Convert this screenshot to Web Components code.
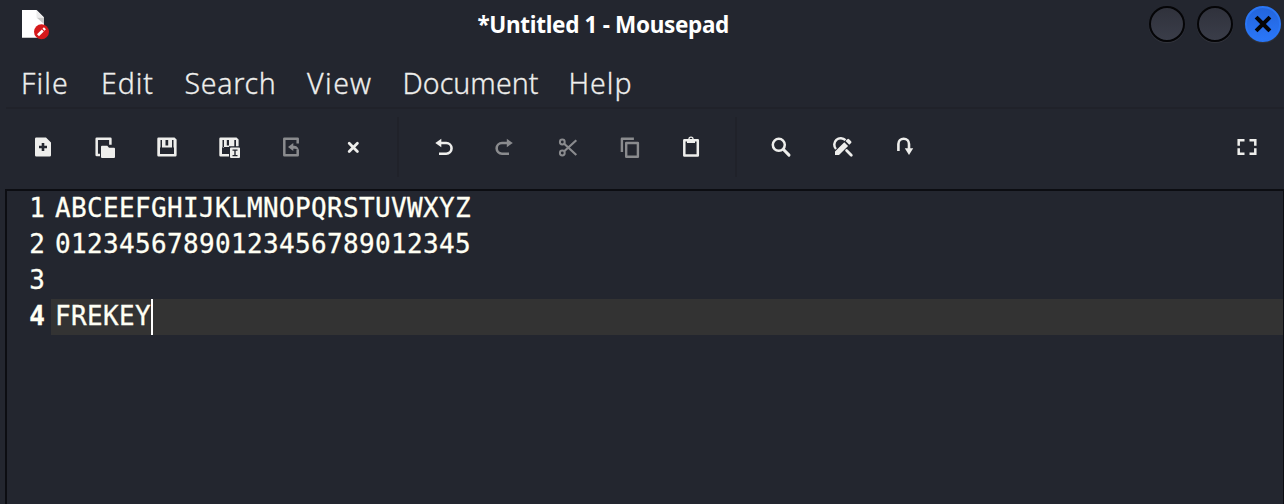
<!DOCTYPE html>
<html lang="en">
<head>
<meta charset="utf-8">
<title>*Untitled 1 - Mousepad</title>
<style>
html,body{margin:0;height:100%;overflow:hidden;background:#23262f}
</style>
</head>
<body>
<mouse-pad></mouse-pad>
<script>
const define = (name, html, ready) => {
  const tpl = document.createElement('template');
  tpl.innerHTML = html;
  customElements.define(name, class extends HTMLElement {
    constructor() {
      super();
      this.attachShadow({ mode: 'open' }).append(tpl.content.cloneNode(true));
    }
    connectedCallback() { if (ready) ready(this, this.shadowRoot); }
  });
};

// A single line of text, tracked so that it fills the width given in its "fit" attribute.
define('fit-text', `<style>:host{display:inline-block;white-space:pre}span{display:inline-block}</style><span><slot></slot></span>`,
  (el, root) => {
    const span = root.querySelector('span');
    const want = +el.getAttribute('fit');
    el.style.width = want + 'px';
    span.style.letterSpacing = (want - span.getBoundingClientRect().width) / el.textContent.length + 'px';
  });

const icons = {
  new: '<path fill="currentColor" fill-rule="evenodd" d="M5.3 2.5H15l5 5v12.700a1.300 1.300 0 0 1-1.300 1.300H5.300A1.300 1.300 0 0 1 4 20.200V3.800a1.300 1.300 0 0 1 1.300-1.300zM10.700 8v2.700H8v2.600h2.700V16h2.600v-2.700H16v-2.600h-2.700V8z"/>',
  open: '<path fill="none" stroke="currentColor" stroke-width="2.500" stroke-linejoin="round" d="M7 19.900H3.700V3.800h13.700v6"/><path fill="currentColor" d="M9 10.800h5.300l1.700 2h5a1 1 0 0 1 1 1V22a1 1 0 0 1-1 1H9a1 1 0 0 1-1-1V11.800a1 1 0 0 1 1-1z"/>',
  save: '<path fill="currentColor" fill-rule="evenodd" d="M3.500 2.500h16l2.100 2.100v15.700a1.200 1.200 0 0 1-1.200 1.200H3.500a1.200 1.200 0 0 1-1.200-1.200V3.700a1.200 1.200 0 0 1 1.200-1.200zM5 12.500V19h14v-6.500zM5.500 5v7.500H7V5zM10.500 5v5.500h2.700V5zM17 5v7.500h1.500V5z"/>',
  saveas: '<path fill="currentColor" fill-rule="evenodd" d="M3.500 2.500h16l2.100 2.100v6.700H19V5h-1.700v6.300H12v10.200H3.500a1.200 1.200 0 0 1-1.200-1.200V3.700a1.200 1.200 0 0 1 1.200-1.200zM5 12v7h7v-7zM5.500 5v7.500H7V5zM9.800 5v5.500H12V5z"/><path fill="currentColor" fill-rule="evenodd" d="M14 12.500h8a1 1 0 0 1 1 1V22a1 1 0 0 1-1 1h-8a1 1 0 0 1-1-1v-8.500a1 1 0 0 1 1-1zM15.500 14.500v1.200h1.800v4.400h-1.800v1.200h5v-1.200h-1.800v-4.400h1.800v-1.200z"/>',
  revert: '<path fill="none" stroke="currentColor" stroke-width="2.500" stroke-linejoin="round" d="M18.700 8.500V3.800H5.300v16.400h13.400v-5.500"/><path fill="currentColor" d="M9 12l5.300-4v2.800c3 0 5.500 1.200 5.700 5.700-1.500-2.200-3.200-2.700-5.700-2.700V16z"/>',
  close: '<path stroke="currentColor" stroke-width="2.800" stroke-linecap="round" d="M8.200 8.200l8.200 8.200m0-8.200l-8.200 8.200"/>',
  undo: '<path fill="none" stroke="currentColor" stroke-width="2.600" d="M8 8h6.200a5.300 5.300 0 0 1 0 10.700H7"/><path fill="currentColor" d="M3.300 8l6-4.200v8.400z"/>',
  redo: '<path fill="none" stroke="currentColor" stroke-width="2.600" d="M14 8H8a5.300 5.300 0 0 0 0 10.700h7"/><path fill="currentColor" d="M18.800 8l-6-4.200v8.400z"/>',
  cut: '<g fill="none" stroke="currentColor" stroke-width="2"><circle cx="6.300" cy="7" r="2.400"/><circle cx="6.300" cy="18" r="2.400"/><path stroke-width="2.200" d="M8.200 8.800L20.300 20M8.200 16.300L20.300 5.200"/></g>',
  copy: '<g fill="none" stroke="currentColor" stroke-width="2.400" stroke-linejoin="round"><path d="M3.900 17V3.700h12"/><path d="M8.200 8h11.700v13.700H8.200z"/></g>',
  paste: '<path fill="none" stroke="currentColor" stroke-width="2.500" stroke-linejoin="round" d="M4.300 5.300h13.500v15.200H4.300z"/><path fill="currentColor" fill-rule="evenodd" d="M7 4.200h1.300a2.700 2.700 0 0 1 5.400 0H15V8H7zM11 2.700a1.400 1.400 0 1 0 0 2.800 1.400 1.400 0 0 0 0-2.800z"/>',
  search: '<circle cx="9.800" cy="9.800" r="6" fill="none" stroke="currentColor" stroke-width="2.500"/><path stroke="currentColor" stroke-width="3" stroke-linecap="round" d="M14.500 14.500l5.500 5.600"/>',
  replace: '<path fill="none" stroke="currentColor" stroke-width="2.500" d="M5 14A6 6 0 0 1 14.500 5.200"/><path fill="currentColor" d="M4 16.500L13.300 7.200l3.800 3.800L8 20.100H4zM14.500 6l1.800-1.800a1.300 1.300 0 0 1 1.800 0l2 2a1.300 1.300 0 0 1 0 1.800l-1.800 1.800z"/><path stroke="currentColor" stroke-width="2.800" stroke-linecap="round" d="M15.600 15.600l4.700 4.700"/>',
  goto: '<path fill="none" stroke="currentColor" stroke-width="2.600" d="M5.400 16V9a5.300 5.300 0 0 1 10.600 0v6"/><path fill="currentColor" d="M11.800 13.300H20.200L16 20z"/>',
  full: '<path fill="none" stroke="currentColor" stroke-width="2.500" d="M9.500 5.300H3.700v5.400M9.500 18.700H3.700v-5.400M14.500 5.300h5.800v5.400M14.500 18.700h5.800v-5.400"/>'
};
define('tool-button', `<style>
:host{display:flex;flex:none;width:62px;height:60px;align-items:center;justify-content:center;color:#eeeeec}
:host([disabled]){color:#8a8b8e}
svg{display:block;width:24px;height:24px}</style><svg viewBox="0 0 24 24" fill="none"></svg>`,
  (el, root) => { root.querySelector('svg').innerHTML = icons[el.getAttribute('icon')]; });

define('tool-separator', `<style>:host{display:block;flex:none;width:2px;height:60px;margin:0 14px 0 13px;background:#20222a}:host([narrow]){margin:0 13px 0 12px}</style>`);

define('window-button', `<style>
:host{display:flex;box-sizing:border-box;width:36px;height:36px;border-radius:50%;border:2px solid #050507;background:linear-gradient(#30323c,#3a3d49);align-items:center;justify-content:center;box-shadow:0 1px 1px #34363e}
svg{display:none;width:32px;height:32px}
:host([close]){background:linear-gradient(#2365dc,#2a76f8);border-color:#2a76f5}
:host([close]) svg{display:block}</style>
<svg viewBox="0 0 32 32"><path d="M10.500 10.500l11 11m0-11L10.500 21.500" stroke="#050507" stroke-width="4" stroke-linecap="square"/></svg>`);

define('title-bar', `<style>
:host{display:grid;grid-template-columns:477.500px 251.500px 1fr;height:60px;color:#fff;font:700 22.500px/50px "Noto Sans",sans-serif}
.app{padding:10px 0 0 22px}.app svg{display:block;width:28px;height:30px}
.buttons{display:flex;justify-content:flex-end;gap:12px;padding:6px 3px 0 0}</style>
<div class="app"><svg viewBox="0 0 28 30"><path fill="#fff" d="M0 0h14.500L22 7.500V28H0z"/><path fill="#b9b9b9" d="M0 27.200h22v.8H0z"/><path fill="#c9c9c9" d="M14.500 7.500H22V14z"/><path fill="#ececec" d="M14.500 0L22 7.500h-6.500a1 1 0 0 1-1-1z"/><circle cx="19.500" cy="21.700" r="7.500" fill="#d5191b"/><path stroke="#fff" stroke-width="2.800" d="M16 25.200l4.800-4.800M21.500 19.700l1.400-1.400"/></svg></div>
<fit-text fit="251.500">*Untitled 1 - Mousepad</fit-text>
<div class="buttons"><window-button></window-button><window-button></window-button><window-button close></window-button></div>`);

define('menu-bar', `<style>
:host{display:flex;box-sizing:border-box;height:49px;margin-left:6px;padding-left:15px;border-bottom:2px solid #20222a;color:#eeeeec;font:350 28.500px/46px "Noto Sans",sans-serif;-webkit-text-stroke:.3px currentColor}
</style><slot></slot>`);

define('menu-item', `<style>:host{display:block;flex:none}</style><slot></slot>`,
  el => { el.style.width = el.getAttribute('width') + 'px'; });

define('tool-bar', `<style>:host{display:flex;box-sizing:border-box;height:80px;padding:8px 6px 0 12px}.space{flex:1}</style><slot></slot><div class="space"></div><slot name="end"></slot>`);

define('text-line', `<style>
:host{display:grid;grid-template-columns:44px 1fr;height:36px;line-height:34px}
.number{text-align:right;padding-right:6px}
.text{display:flex;padding-left:4px}
:host([current]) .number{font-weight:700}
:host([current]) .text{background:#333}
.caret{display:none;width:2px;height:36px;background:#fff}
:host([current]) .caret{display:block}</style>
<div class="number"></div><div class="text"><slot></slot><div class="caret"></div></div>`,
  (el, root) => { root.querySelector('.number').textContent = el.getAttribute('number'); });

define('text-editor', `<style>
:host{display:block;box-sizing:border-box;flex:1;margin-left:5px;border:solid #0c0d12;border-width:2px 1px 0 2px;color:#fffff4;font:26px/36px "DejaVu Sans Mono",monospace;-webkit-text-stroke:.3px currentColor}
</style><slot></slot>`);

define('mouse-pad', `<style>:host{display:flex;flex-direction:column;height:504px;width:1284px;background:#23262f}</style>
<title-bar></title-bar>
<menu-bar>
<menu-item width="80"><fit-text fit="48">File</fit-text></menu-item><menu-item width="83.500"><fit-text fit="53">Edit</fit-text></menu-item><menu-item width="122.500"><fit-text fit="92">Search</fit-text></menu-item><menu-item width="95.500"><fit-text fit="65.500">View</fit-text></menu-item><menu-item width="166"><fit-text fit="136">Document</fit-text></menu-item><menu-item width="80"><fit-text fit="64">Help</fit-text></menu-item>
</menu-bar>
<tool-bar>
<tool-button icon="new"></tool-button><tool-button icon="open"></tool-button><tool-button icon="save"></tool-button><tool-button icon="saveas"></tool-button><tool-button icon="revert" disabled></tool-button><tool-button icon="close"></tool-button>
<tool-separator></tool-separator>
<tool-button icon="undo"></tool-button><tool-button icon="redo" disabled></tool-button><tool-button icon="cut" disabled></tool-button><tool-button icon="copy" disabled></tool-button><tool-button icon="paste"></tool-button>
<tool-separator narrow></tool-separator>
<tool-button icon="search"></tool-button><tool-button icon="replace"></tool-button><tool-button icon="goto"></tool-button>
<tool-button icon="full" slot="end"></tool-button>
</tool-bar>
<text-editor>
<text-line number="1"><fit-text fit="416">ABCEEFGHIJKLMNOPQRSTUVWXYZ</fit-text></text-line>
<text-line number="2"><fit-text fit="416">01234567890123456789012345</fit-text></text-line>
<text-line number="3"></text-line>
<text-line number="4" current><fit-text fit="96">FREKEY</fit-text></text-line>
</text-editor>`);
</script>
</body>
</html>
